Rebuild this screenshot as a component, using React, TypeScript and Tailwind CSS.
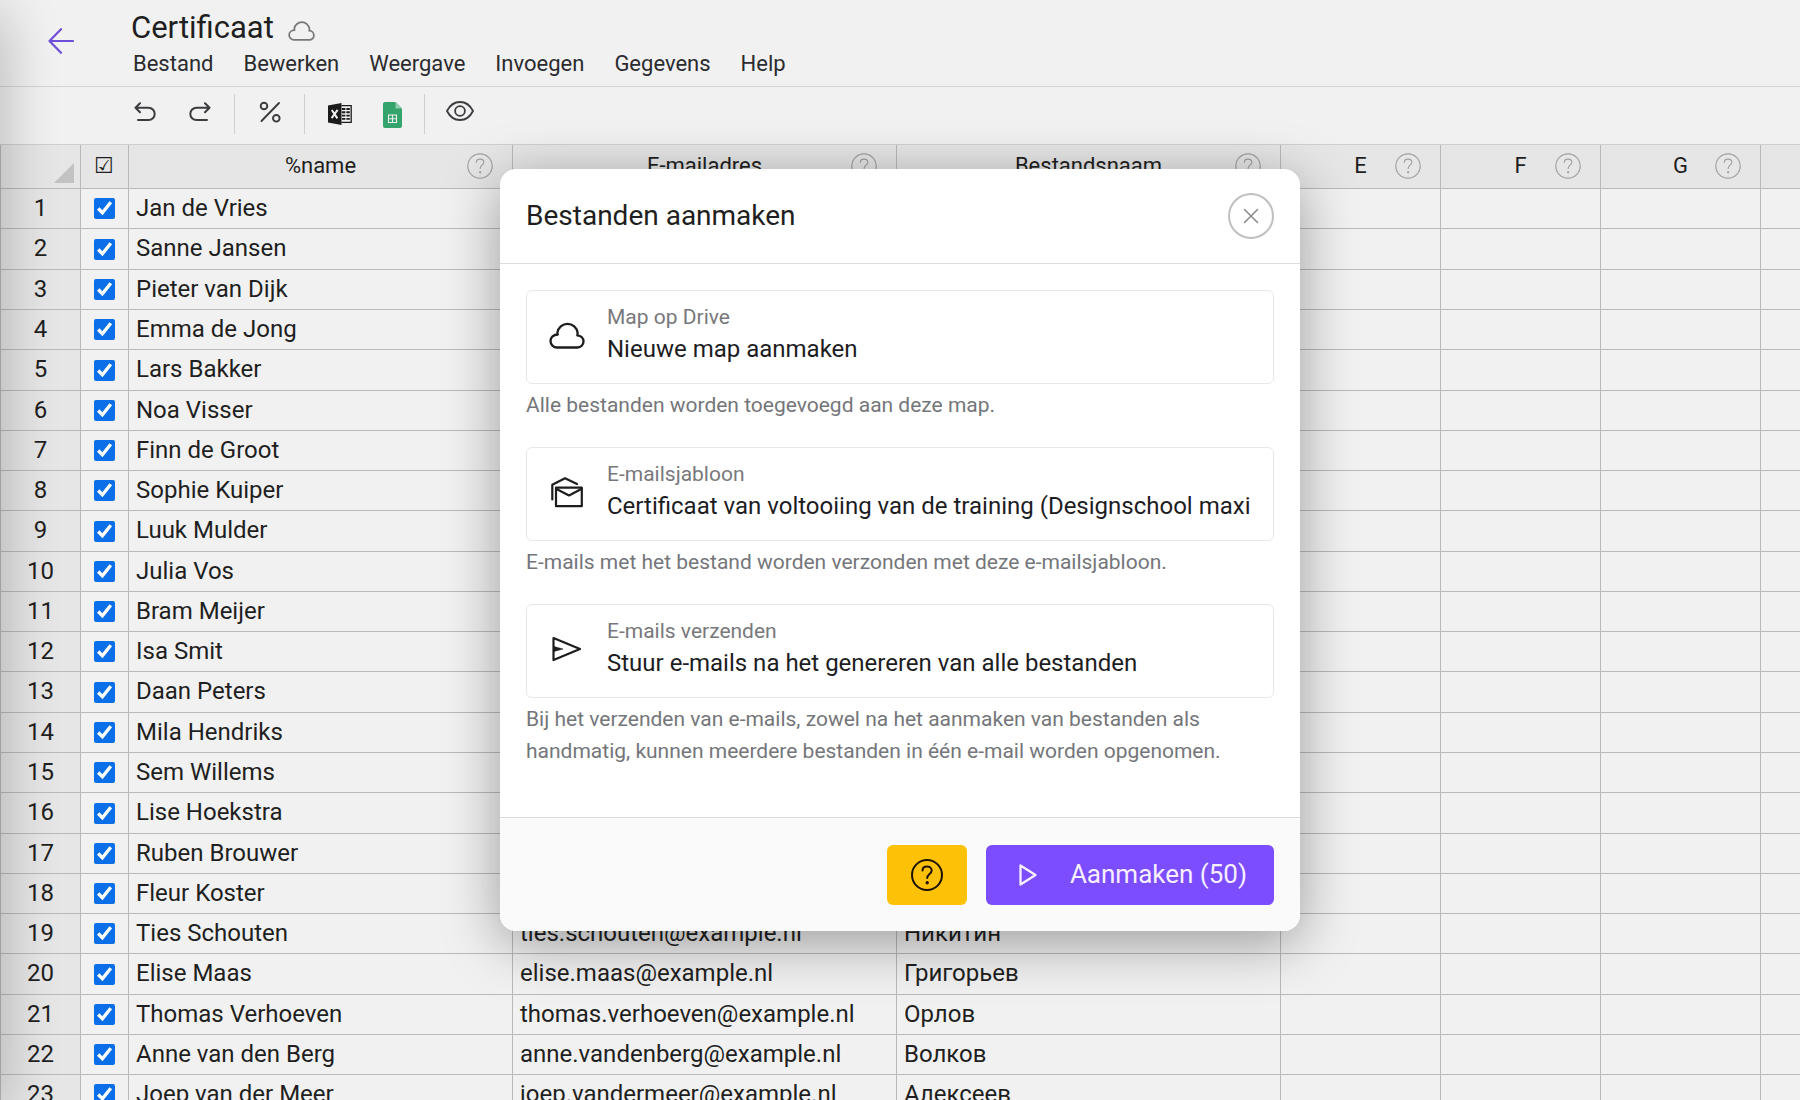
import { useState } from 'react'

interface Person {
  name: string
  email: string
  file: string
}

const people: Person[] = [
  { name: 'Jan de Vries', email: 'jan.devries@example.nl', file: 'Иванов' },
  { name: 'Sanne Jansen', email: 'sanne.jansen@example.nl', file: 'Смирнов' },
  { name: 'Pieter van Dijk', email: 'pieter.vandijk@example.nl', file: 'Кузнецов' },
  { name: 'Emma de Jong', email: 'emma.dejong@example.nl', file: 'Попов' },
  { name: 'Lars Bakker', email: 'lars.bakker@example.nl', file: 'Васильев' },
  { name: 'Noa Visser', email: 'noa.visser@example.nl', file: 'Петров' },
  { name: 'Finn de Groot', email: 'finn.degroot@example.nl', file: 'Соколов' },
  { name: 'Sophie Kuiper', email: 'sophie.kuiper@example.nl', file: 'Михайлов' },
  { name: 'Luuk Mulder', email: 'luuk.mulder@example.nl', file: 'Новиков' },
  { name: 'Julia Vos', email: 'julia.vos@example.nl', file: 'Фёдоров' },
  { name: 'Bram Meijer', email: 'bram.meijer@example.nl', file: 'Морозов' },
  { name: 'Isa Smit', email: 'isa.smit@example.nl', file: 'Лебедев' },
  { name: 'Daan Peters', email: 'daan.peters@example.nl', file: 'Козлов' },
  { name: 'Mila Hendriks', email: 'mila.hendriks@example.nl', file: 'Павлов' },
  { name: 'Sem Willems', email: 'sem.willems@example.nl', file: 'Семёнов' },
  { name: 'Lise Hoekstra', email: 'lise.hoekstra@example.nl', file: 'Егоров' },
  { name: 'Ruben Brouwer', email: 'ruben.brouwer@example.nl', file: 'Голубев' },
  { name: 'Fleur Koster', email: 'fleur.koster@example.nl', file: 'Богданов' },
  { name: 'Ties Schouten', email: 'ties.schouten@example.nl', file: 'Никитин' },
  { name: 'Elise Maas', email: 'elise.maas@example.nl', file: 'Григорьев' },
  { name: 'Thomas Verhoeven', email: 'thomas.verhoeven@example.nl', file: 'Орлов' },
  { name: 'Anne van den Berg', email: 'anne.vandenberg@example.nl', file: 'Волков' },
  { name: 'Joep van der Meer', email: 'joep.vandermeer@example.nl', file: 'Алексеев' },
]

const menu = ['Bestand', 'Bewerken', 'Weergave', 'Invoegen', 'Gegevens', 'Help']
const columns = ['%name', 'E-mailadres', 'Bestandsnaam', 'E', 'F', 'G']

function CloudIcon({ className, stroke }: { className: string; stroke: number }) {
  return (
    <svg viewBox="0 0 36 28" className={className} fill="none" stroke="currentColor" strokeWidth={stroke} strokeLinejoin="round">
      <path d="M8 26.500H28.500a6 6 0 0 0 6-6c0-3.500-2.800-6-6.200-6.200.2-.8.300-1.700.3-2.600A10.200 10.200 0 0 0 8.400 11.600c.1.600.2 1.300.4 1.900C4.500 13.500 1.500 16.500 1.500 20a6.500 6.500 0 0 0 6.500 6.500z" />
    </svg>
  )
}

function UndoIcon({ className }: { className: string }) {
  return (
    <svg viewBox="0 0 22 20" className={className} fill="none" stroke="currentColor" strokeWidth="2" strokeLinecap="round" strokeLinejoin="round">
      <path d="M6 1.200 1.500 5.700 6 10.200M2 5.700h12.500a6.200 6.200 0 0 1 0 12.400H4" />
    </svg>
  )
}

function PercentIcon() {
  return (
    <svg viewBox="0 0 22 22" className="w-[22px] h-[22px]" fill="none" stroke="currentColor" strokeWidth="1.900" strokeLinecap="round">
      <path d="M20 2 2.500 20" />
      <circle cx="5" cy="5" r="3.300" />
      <circle cx="17.300" cy="17.300" r="3.300" />
    </svg>
  )
}

function ExcelIcon() {
  return (
    <svg viewBox="0 0 24 22" className="w-6 h-[22px]">
      <path d="M0 2.400 13.500 0v22L0 19.600z" fill="#1b1b1b" />
      <path d="M13.500 2.600h9.700v16.800h-9.700" fill="none" stroke="#1b1b1b" strokeWidth="1.300" />
      <path d="M14 6h8M14 9.300h8M14 12.600h8M14 15.900h8" stroke="#1b1b1b" strokeWidth="1.900" strokeDasharray="3.400 1" />
      <path d="m3.800 7 5.600 8.400M9.600 6.800 3.600 15.200" stroke="#f1f1f1" strokeWidth="2" />
    </svg>
  )
}

function SheetsIcon() {
  return (
    <svg viewBox="0 0 19 26" className="w-[19px] h-[26px]">
      <path d="M2 0h10.500L19 6.500V24a2 2 0 0 1-2 2H2a2 2 0 0 1-2-2V2a2 2 0 0 1 2-2z" fill="#34a36c" />
      <path d="M12.500 0 19 6.500h-6.500z" fill="#8fd0ae" />
      <path d="M5.500 13h8v7.500h-8zM5.500 16.700h8M9.500 13v7.500" fill="none" stroke="#f1f1f1" strokeWidth="1.100" />
    </svg>
  )
}

function EyeIcon() {
  return (
    <svg viewBox="0 0 28 20" className="w-7 h-5" fill="none" stroke="currentColor" strokeWidth="1.800" strokeLinejoin="round">
      <path d="M1 10C4 4 8.700 1 14 1s10 3 13 9c-3 6-7.700 9-13 9S4 16 1 10z" />
      <circle cx="14" cy="10" r="4.900" />
    </svg>
  )
}

function HelpIcon({ className, stroke }: { className: string; stroke: number }) {
  return (
    <svg viewBox="0 0 32 32" className={className} fill="none" stroke="currentColor" strokeWidth={stroke} strokeLinecap="round" strokeLinejoin="round">
      <circle cx="16" cy="16" r="15" />
      <path d="M11.500 11.500c0-2.500 2-4 4.500-4s4.700 1.500 4.700 4c0 3.500-4.500 3.500-4.500 7.500" />
      <circle cx="16.200" cy="23.700" r="0.700" fill="currentColor" />
    </svg>
  )
}

function MailsIcon() {
  return (
    <svg viewBox="0 0 32 31" className="w-8 h-[31px]" fill="none" stroke="currentColor" strokeWidth="2.200" strokeLinejoin="round" strokeLinecap="round">
      <path d="M5 10.700h25.800v18.500H5z" />
      <path d="m5.500 12 12.500 6.500L30.300 12" />
      <path d="M1.300 22.500V7.700L14 1.300l12 5.800" />
    </svg>
  )
}

function SendIcon() {
  return (
    <svg viewBox="0 0 30 26" className="w-[30px] h-[26px]" fill="none" stroke="currentColor" strokeWidth="2.200" strokeLinejoin="round">
      <path d="M1.500 2 28 13 1.500 24z" />
      <path d="M2 10.500 11 13l-9 2.500z" fill="currentColor" strokeWidth="0.500" />
    </svg>
  )
}

interface FieldProps {
  icon: React.ReactNode
  label: string
  value: string
  hint: string
}

function Field({ icon, label, value, hint }: FieldProps) {
  return (
    <div>
      <button className="w-full h-[94px] flex items-center border border-[#e8e8e8] rounded-md pr-4 pb-1 text-left">
        <span className="w-20 shrink-0 flex justify-center text-[#1d1d1f]">{icon}</span>
        <span className="flex-1 min-w-0 block pb-1">
          <span className="block text-[21px] leading-8 text-[#78787c]">{label}</span>
          <span className="block text-2xl leading-8 text-[#1d1d1f] whitespace-nowrap overflow-hidden">{value}</span>
        </span>
      </button>
      <p className="mt-[5px] pb-px text-[21px] leading-8 text-[#74767a]">{hint}</p>
    </div>
  )
}

function Header() {
  return (
    <header className="h-[87px] flex border-b border-[#d4d4d4]">
      <button aria-label="Terug" className="w-[131px] shrink-0 pl-12 pb-1 text-[#6f4fd8]">
        <svg viewBox="0 0 26 26" className="w-[26px] h-[26px]" fill="none" stroke="currentColor" strokeWidth="2.200" strokeLinecap="round" strokeLinejoin="round">
          <path d="M25 13H1.500M13 1.200 1.500 13 13 24.800" />
        </svg>
      </button>
      <div>
        <div className="flex items-center h-[46px] pt-2.5 gap-3.5">
          <h1 className="text-[31px] leading-9">Certificaat</h1>
          <CloudIcon className="w-[27px] h-[21px] mt-1 text-[#77777b]" stroke={2.300} />
        </div>
        <nav className="flex gap-[30px] pl-0.5">
          {menu.map((item) => (
            <button key={item} className="text-[22px] leading-9 text-[#2b2b2f]">{item}</button>
          ))}
        </nav>
      </div>
    </header>
  )
}

function Toolbar() {
  return (
    <div className="h-[58px] flex items-center pl-[130px] pb-1 border-b border-[#cfcfcf] text-[#3c3c40]">
      <button aria-label="Ongedaan maken" className="w-[54px] pl-1 pb-1">
        <UndoIcon className="w-[22px] h-5" />
      </button>
      <button aria-label="Opnieuw" className="w-[50px] pl-[5px] pb-1">
        <UndoIcon className="w-[22px] h-5 -scale-x-100" />
      </button>
      <div className="h-10 border-l border-[#d0d0d0]" />
      <button aria-label="Percentage" className="w-[69px] flex justify-center pb-1"><PercentIcon /></button>
      <div className="h-10 border-l border-[#d0d0d0]" />
      <button aria-label="Excel" className="w-[69px] flex justify-center"><ExcelIcon /></button>
      <button aria-label="Google Spreadsheets" className="w-[50px] pl-[9px] pt-0.5"><SheetsIcon /></button>
      <div className="h-10 border-l border-[#d0d0d0]" />
      <button aria-label="Voorbeeld" className="w-[70px] flex justify-center pb-1.5"><EyeIcon /></button>
    </div>
  )
}

function Sheet() {
  const [unchecked, setUnchecked] = useState<number[]>([])

  const toggle = (n: number) => {
    setUnchecked(unchecked.includes(n) ? unchecked.filter((x) => x !== n) : [...unchecked, n])
  }

  return (
    <table className="w-full table-fixed border-separate border-spacing-0 text-2xl">
      <colgroup>
        <col className="w-[81px]" />
        <col className="w-12" />
        <col className="w-96" />
        <col className="w-96" />
        <col className="w-96" />
        <col className="w-40" />
        <col className="w-40" />
        <col className="w-40" />
        <col />
      </colgroup>
      <thead>
        <tr className="h-11 bg-[#e6e6e6] text-[22px]">
          <th className="border-r border-b border-l border-[#b9b9b9] p-0">
            <div className="flex justify-end pr-1.5 pt-3">
              <svg viewBox="0 0 20 20" className="w-5 h-5"><path d="M20 0v20H0z" fill="#c2c2c2" /></svg>
            </div>
          </th>
          <th className="border-r border-b border-[#b9b9b9] p-0 pr-0.5 pb-0.5 font-normal leading-8">☑</th>
          {columns.map((col) => (
            <th key={col} className="border-r border-b border-[#b9b9b9] p-0 font-normal">
              <div className="relative leading-8 pb-0.5">
                {col}
                <button aria-label={`Uitleg ${col}`} className="absolute right-[19px] top-[3px] text-[#a0a0a0]">
                  <HelpIcon className="w-[26px] h-[26px]" stroke={1.400} />
                </button>
              </div>
            </th>
          ))}
          <th className="border-b border-[#b9b9b9] p-0" />
        </tr>
      </thead>
      <tbody>
        {people.map((p, i) => {
          const n = i + 1
          return (
            <tr key={p.email} className={[2, 5, 9].includes(n % 11) ? 'h-[41px]' : 'h-10'}>
              <td className="border-x border-b border-[#b9b9b9] bg-[#e6e6e6] p-0 pb-0.5 text-center leading-8">{n}</td>
              <td className="border-r border-b border-[#b9b9b9] p-0 pr-px">
                <input
                  type="checkbox"
                  aria-label={p.name}
                  checked={!unchecked.includes(n)}
                  onChange={() => toggle(n)}
                  className="block mx-auto w-[21px] h-[21px] accent-[#0a6fe8]"
                />
              </td>
              <td className="border-r border-b border-[#b9b9b9] p-0 pl-[7px] pb-0.5 leading-8">{p.name}</td>
              <td className="border-r border-b border-[#b9b9b9] p-0 pl-[7px] pb-0.5 leading-8">{p.email}</td>
              <td className="border-r border-b border-[#b9b9b9] p-0 pl-[7px] pb-0.5 leading-8">{p.file}</td>
              <td className="border-r border-b border-[#b9b9b9] p-0" />
              <td className="border-r border-b border-[#b9b9b9] p-0" />
              <td className="border-r border-b border-[#b9b9b9] p-0" />
              <td className="border-b border-[#b9b9b9] p-0" />
            </tr>
          )
        })}
      </tbody>
    </table>
  )
}

function CreateDialog() {
  return (
    <div role="dialog" aria-labelledby="dialog-title" className="w-[800px] bg-white rounded-2xl overflow-hidden shadow-[0_12px_56px_rgba(0,0,0,0.36)]">
      <div className="h-[95px] flex items-center justify-between px-[26px] border-b border-[#dedede]">
        <h2 id="dialog-title" className="text-[28px] leading-9">Bestanden aanmaken</h2>
        <button aria-label="Sluiten" className="w-[46px] h-[46px] rounded-full border-2 border-[#c0c0c0] flex items-center justify-center text-[#8c8c8c]">
          <svg viewBox="0 0 16 16" className="w-4 h-4" fill="none" stroke="currentColor" strokeWidth="1.600" strokeLinecap="round">
            <path d="m1.500 1.500 13 13M14.500 1.500l-13 13" />
          </svg>
        </button>
      </div>
      <div className="px-[26px] pt-[26px] pb-[49px] flex flex-col gap-[25px]">
        <Field
          icon={<CloudIcon className="w-9 h-7" stroke={2.300} />}
          label="Map op Drive"
          value="Nieuwe map aanmaken"
          hint="Alle bestanden worden toegevoegd aan deze map."
        />
        <Field
          icon={<MailsIcon />}
          label="E-mailsjabloon"
          value="Certificaat van voltooiing van de training (Designschool maxi"
          hint="E-mails met het bestand worden verzonden met deze e-mailsjabloon."
        />
        <Field
          icon={<SendIcon />}
          label="E-mails verzenden"
          value="Stuur e-mails na het genereren van alle bestanden"
          hint="Bij het verzenden van e-mails, zowel na het aanmaken van bestanden als handmatig, kunnen meerdere bestanden in één e-mail worden opgenomen."
        />
      </div>
      <div className="h-[114px] flex items-center justify-end gap-[19px] px-[26px] bg-[#fafafa] border-t border-[#dedede]">
        <button aria-label="Help" className="w-20 h-[60px] rounded-md bg-[#fdc108] flex items-center justify-center text-[#1d1300]">
          <HelpIcon className="w-8 h-8" stroke={2} />
        </button>
        <button className="w-72 h-[60px] rounded-md bg-[#7c4dff] flex items-center justify-end pr-[27px] gap-[33px] text-[26px] text-[#f7efff]">
          <svg viewBox="0 0 18 22" className="w-[18px] h-[22px]" fill="none" stroke="currentColor" strokeWidth="2.300" strokeLinejoin="round">
            <path d="M1.500 1.500 16.500 11l-15 9.500z" />
          </svg>
          Aanmaken (50)
        </button>
      </div>
    </div>
  )
}

export default function App() {
  return (
    <div className="relative h-screen overflow-hidden bg-[#f1f1f1] text-[#1f1f21] font-['Roboto','Noto_Sans',sans-serif]">
      <Header />
      <Toolbar />
      <Sheet />
      <div className="absolute top-0 bottom-0 right-full w-10 shadow-[0_12px_56px_rgba(0,0,0,0.3)]" />
      <div className="absolute inset-0 flex items-center justify-center">
        <CreateDialog />
      </div>
    </div>
  )
}
